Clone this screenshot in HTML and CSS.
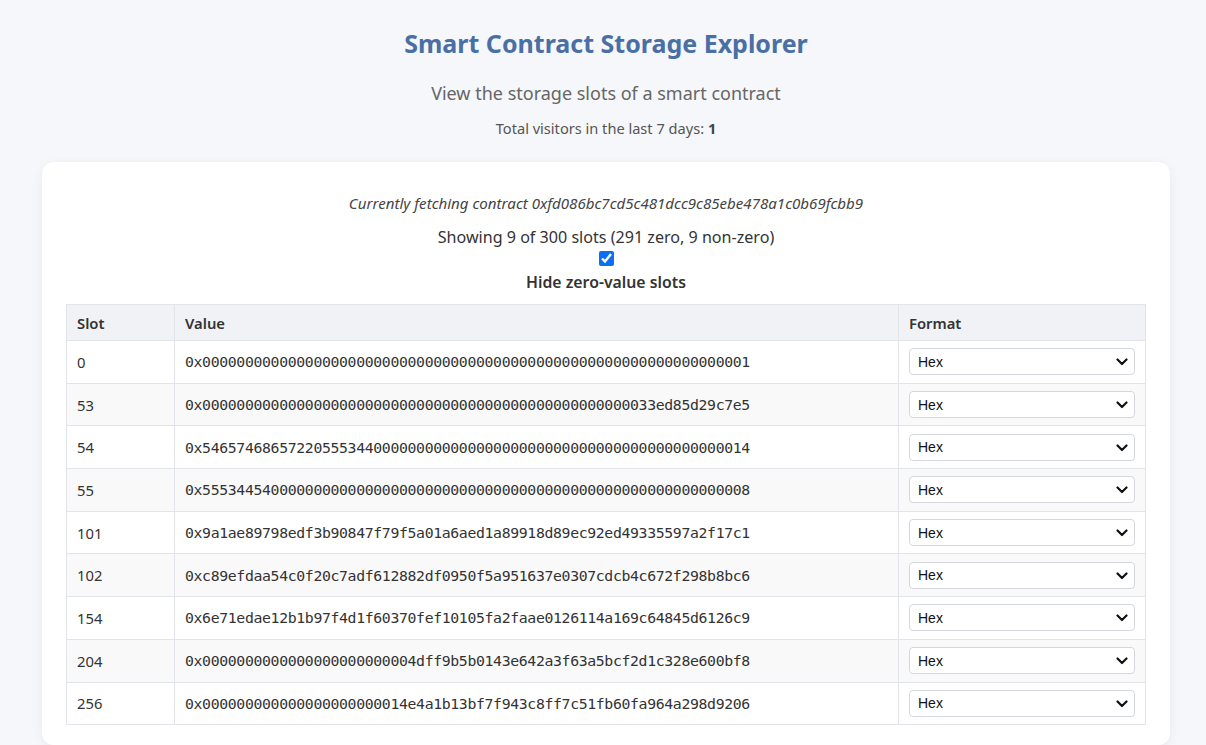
FILE: index.html
```html
<!DOCTYPE html>
<html lang="en">
<head>
<meta charset="utf-8">
<title>Smart Contract Storage Explorer</title>
<link rel="stylesheet" href="styles.css">
</head>
<body>
<div class="page">
  <header class="hero">
    <h1 class="title">Smart Contract Storage Explorer</h1>
    <p class="subtitle">View the storage slots of a smart contract</p>
    <p class="visitors">Total visitors in the last 7 days: <strong>1</strong></p>
  </header>
  <main class="card">
    <p class="fetching">Currently fetching contract 0xfd086bc7cd5c481dcc9c85ebe478a1c0b69fcbb9</p>
    <p class="summary">Showing 9 of 300 slots (291 zero, 9 non-zero)</p>
    <label class="toggle">
      <input type="checkbox" class="toggle-box" checked>
      <span class="toggle-label">Hide zero-value slots</span>
    </label>
    <table class="slots">
      <colgroup>
        <col class="col-slot"><col class="col-value"><col class="col-format">
      </colgroup>
      <thead>
        <tr><th>Slot</th><th>Value</th><th>Format</th></tr>
      </thead>
      <tbody>
        <tr><td>0</td><td class="mono">0x0000000000000000000000000000000000000000000000000000000000000001</td><td><div class="fmt-wrap"><select class="fmt"><option>Hex</option></select><svg class="chev" viewBox="0 0 12 8" width="12" height="8"><path d="M1.5 1.5 6 6l4.5-4.5" fill="none" stroke="#111" stroke-width="2.2" stroke-linecap="round" stroke-linejoin="round"/></svg></div></td></tr>
        <tr><td>53</td><td class="mono">0x00000000000000000000000000000000000000000000000000033ed85d29c7e5</td><td><div class="fmt-wrap"><select class="fmt"><option>Hex</option></select><svg class="chev" viewBox="0 0 12 8" width="12" height="8"><path d="M1.5 1.5 6 6l4.5-4.5" fill="none" stroke="#111" stroke-width="2.2" stroke-linecap="round" stroke-linejoin="round"/></svg></div></td></tr>
        <tr><td>54</td><td class="mono">0x5465746865722055534400000000000000000000000000000000000000000014</td><td><div class="fmt-wrap"><select class="fmt"><option>Hex</option></select><svg class="chev" viewBox="0 0 12 8" width="12" height="8"><path d="M1.5 1.5 6 6l4.5-4.5" fill="none" stroke="#111" stroke-width="2.2" stroke-linecap="round" stroke-linejoin="round"/></svg></div></td></tr>
        <tr><td>55</td><td class="mono">0x5553445400000000000000000000000000000000000000000000000000000008</td><td><div class="fmt-wrap"><select class="fmt"><option>Hex</option></select><svg class="chev" viewBox="0 0 12 8" width="12" height="8"><path d="M1.5 1.5 6 6l4.5-4.5" fill="none" stroke="#111" stroke-width="2.2" stroke-linecap="round" stroke-linejoin="round"/></svg></div></td></tr>
        <tr><td>101</td><td class="mono">0x9a1ae89798edf3b90847f79f5a01a6aed1a89918d89ec92ed49335597a2f17c1</td><td><div class="fmt-wrap"><select class="fmt"><option>Hex</option></select><svg class="chev" viewBox="0 0 12 8" width="12" height="8"><path d="M1.5 1.5 6 6l4.5-4.5" fill="none" stroke="#111" stroke-width="2.2" stroke-linecap="round" stroke-linejoin="round"/></svg></div></td></tr>
        <tr><td>102</td><td class="mono">0xc89efdaa54c0f20c7adf612882df0950f5a951637e0307cdcb4c672f298b8bc6</td><td><div class="fmt-wrap"><select class="fmt"><option>Hex</option></select><svg class="chev" viewBox="0 0 12 8" width="12" height="8"><path d="M1.5 1.5 6 6l4.5-4.5" fill="none" stroke="#111" stroke-width="2.2" stroke-linecap="round" stroke-linejoin="round"/></svg></div></td></tr>
        <tr><td>154</td><td class="mono">0x6e71edae12b1b97f4d1f60370fef10105fa2faae0126114a169c64845d6126c9</td><td><div class="fmt-wrap"><select class="fmt"><option>Hex</option></select><svg class="chev" viewBox="0 0 12 8" width="12" height="8"><path d="M1.5 1.5 6 6l4.5-4.5" fill="none" stroke="#111" stroke-width="2.2" stroke-linecap="round" stroke-linejoin="round"/></svg></div></td></tr>
        <tr><td>204</td><td class="mono">0x0000000000000000000000004dff9b5b0143e642a3f63a5bcf2d1c328e600bf8</td><td><div class="fmt-wrap"><select class="fmt"><option>Hex</option></select><svg class="chev" viewBox="0 0 12 8" width="12" height="8"><path d="M1.5 1.5 6 6l4.5-4.5" fill="none" stroke="#111" stroke-width="2.2" stroke-linecap="round" stroke-linejoin="round"/></svg></div></td></tr>
        <tr><td>256</td><td class="mono">0x000000000000000000000014e4a1b13bf7f943c8ff7c51fb60fa964a298d9206</td><td><div class="fmt-wrap"><select class="fmt"><option>Hex</option></select><svg class="chev" viewBox="0 0 12 8" width="12" height="8"><path d="M1.5 1.5 6 6l4.5-4.5" fill="none" stroke="#111" stroke-width="2.2" stroke-linecap="round" stroke-linejoin="round"/></svg></div></td></tr>
      </tbody>
    </table>
  </main>
</div>
</body>
</html>
```
FILE: styles.css
```css
html, body {
  margin: 0;
  padding: 0;
}
body {
  background: #f5f7fa;
  font-family: "Noto Sans", "Open Sans", sans-serif;
  color: #333;
}
.page {
  width: 1128px;
  margin: 0 0 0 42px;
  padding: 26px 0 0;
}
.hero {
  text-align: center;
}
.title {
  margin: 0;
  font-size: 25px;
  line-height: 34px;
  font-weight: 700;
  color: #4a6fa5;
}
.subtitle {
  margin: 20px 0 0;
  font-size: 18px;
  line-height: 26px;
  color: #666;
}
.visitors {
  margin: 12px 0 0;
  font-size: 14.6px;
  line-height: 20px;
  color: #555;
}
.visitors strong {
  color: #444;
}
.card {
  margin-top: 24px;
  background: #fff;
  border-radius: 12px;
  box-shadow: 0 2px 12px rgba(0, 0, 0, 0.06);
  padding: 30px 24px 20px;
  text-align: center;
}
.fetching {
  margin: 0;
  font-size: 15.1px;
  line-height: 22px;
  font-style: italic;
  color: #444;
}
.summary {
  margin: 12px 0 0;
  font-size: 16.1px;
  line-height: 22px;
  color: #333;
}
.toggle {
  display: flex;
  flex-direction: column;
  align-items: center;
}
.toggle-box {
  margin: 3px 0 0;
  width: 15px;
  height: 15px;
  accent-color: #0b6ef6;
}
.toggle-label {
  margin-top: 5px;
  font-size: 15.8px;
  line-height: 22px;
  font-weight: 600;
  color: #333;
}
.slots {
  margin-top: 11px;
  width: 100%;
  border-collapse: collapse;
  text-align: left;
  table-layout: fixed;
}
.col-slot { width: 108px; }
.col-format { width: 247px; }
.slots th,
.slots td {
  border: 1px solid #e1e4e8;
  padding: 0 10px;
  font-size: 14.8px;
  color: #333;
}
.slots th {
  background: #f0f2f5;
  height: 35px;
  font-weight: 600;
}
.slots td {
  height: 41.7px;
}
.slots tbody tr:nth-child(even) td {
  background: #f9f9f9;
}
.mono {
  font-family: "DejaVu Sans Mono", "Liberation Mono", monospace;
  font-size: 14.2px;
  letter-spacing: -0.35px;
  color: #333;
  white-space: nowrap;
}
.fmt-wrap {
  position: relative;
}
.fmt {
  display: block;
  width: 100%;
  height: 27px;
  padding: 0 30px 0 8px;
  border: 1px solid #d4d8de;
  border-radius: 4px;
  background: #fff;
  font-family: "Liberation Sans", Arial, sans-serif;
  font-size: 14px;
  color: #111;
  appearance: none;
  -webkit-appearance: none;
}
.chev {
  position: absolute;
  right: 7px;
  top: 10px;
  pointer-events: none;
}
```
